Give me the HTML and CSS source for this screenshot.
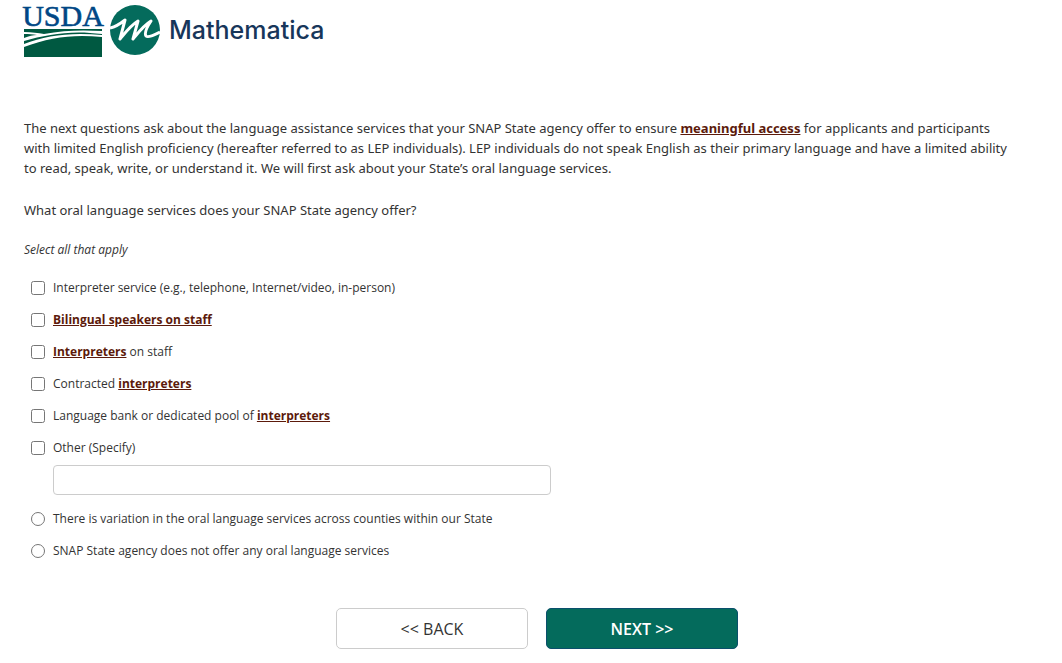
FILE: index.html
```html
<!DOCTYPE html>
<html lang="en">
<head>
    <meta charset="utf-8">
    <title>Oral language services</title>
    <meta name="viewport" content="width=device-width, initial-scale=1">
    <link rel="stylesheet" href="styles.css">
</head>
<body>
    <header class="logos">
        <svg class="logo-usda" viewBox="0 0 78 54" role="img" aria-label="USDA">
            <text class="usda-text" x="39" y="23" text-anchor="middle">USDA</text>
            <rect y="26" width="78" height="28" fill="#005941"/>
            <path fill="#fff" d="M0 29 C8 29 14 30 20 31 C40 27 60 27 78 28 V31 C48 27 24 31 0 38 V35 C5 33 9 32 13 32 C9 31 5 31 0 31 Z"/>
            <path fill="#fff" d="M0 41 C22 32 48 29 78 32 V34 C50 31 26 34 0 44 Z"/>
        </svg>
        <svg class="logo-mark" viewBox="0 0 50 50" aria-hidden="true">
            <circle cx="25" cy="25" r="25" fill="#046b5c"/>
            <path fill="none" stroke="#fff" stroke-width="3" stroke-linejoin="round" d="M0 23 C5 22 10 19 15 15 L10 34 C15 28 20 21 28 16 L23 34 C28 28 33 21 41 16 C37 22 34 28 36 31 C38 33 44 30 50 27"/>
        </svg>
        <span class="logo-name">Mathematica</span>
    </header>

    <form class="survey">
        <p class="intro">The next questions ask about the language assistance services that your SNAP State agency offer to ensure <a href="#" class="term">meaningful access</a> for applicants and participants<br>
        with limited English proficiency (hereafter referred to as LEP individuals). LEP individuals do not speak English as their primary language and have a limited ability<br>
        to read, speak, write, or understand it. We will first ask about your State’s oral language services.</p>

        <p class="question" id="question">What oral language services does your SNAP State agency offer?</p>
        <p class="hint">Select all that apply</p>

        <div class="options" role="group" aria-labelledby="question">
            <div class="option">
                <input type="checkbox" id="opt1">
                <label for="opt1">Interpreter service (e.g., telephone, Internet/video, in-person)</label>
            </div>
            <div class="option">
                <input type="checkbox" id="opt2">
                <label for="opt2"><a href="#" class="term">Bilingual speakers on staff</a></label>
            </div>
            <div class="option">
                <input type="checkbox" id="opt3">
                <label for="opt3"><a href="#" class="term">Interpreters</a> on staff</label>
            </div>
            <div class="option">
                <input type="checkbox" id="opt4">
                <label for="opt4">Contracted <a href="#" class="term">interpreters</a></label>
            </div>
            <div class="option">
                <input type="checkbox" id="opt5">
                <label for="opt5">Language bank or dedicated pool of <a href="#" class="term">interpreters</a></label>
            </div>
            <div class="option">
                <input type="checkbox" id="opt6">
                <label for="opt6">Other (Specify)</label>
            </div>
            <input type="text" class="other-text" aria-label="Other (Specify)">
            <div class="option">
                <input type="radio" name="none" id="opt7">
                <label for="opt7">There is variation in the oral language services across counties within our State</label>
            </div>
            <div class="option">
                <input type="radio" name="none" id="opt8">
                <label for="opt8">SNAP State agency does not offer any oral language services</label>
            </div>
        </div>

        <div class="buttons">
            <button type="button" class="btn btn-back">&lt;&lt; BACK</button>
            <button type="submit" class="btn btn-next">NEXT &gt;&gt;</button>
        </div>
    </form>
</body>
</html>
```
FILE: styles.css
```css
*{
    box-sizing: border-box;
}
body{
    margin: 0;
    background: #fff;
    color: #333;
    font-family: "Open Sans", "Noto Sans", sans-serif;
    font-size: 12px;
    line-height: 20px;
}
p{
    margin: 0;
}
.logos{
    display: flex;
    align-items: center;
    height: 60px;
    padding: 0 24px;
}
.logo-usda{
    width: 78px;
    height: 54px;
    overflow: visible;
}
.usda-text{
    font-family: "Liberation Serif", serif;
    font-size: 30px;
    fill: #004785;
    stroke: #004785;
    stroke-width: 0.6px;
}
.logo-mark{
    width: 50px;
    height: 50px;
    margin: 0 9px 0 8px;
}
.logo-name{
    color: #17365a;
    font-family: Inter, sans-serif;
    font-size: 25px;
    font-weight: 500;
    line-height: 30px;
}
.survey{
    padding: 58px 16px 16px 24px;
}
.intro,
.question{
    font-family: "Noto Sans", "Open Sans", sans-serif;
    font-size: 13px;
}
.question{
    margin-top: 22px;
}
.hint{
    margin-top: 20px;
    font-style: italic;
}
.term{
    color: #5c1a0b;
    font-weight: 700;
    text-decoration: underline;
}
.options{
    margin-top: 18px;
    padding-left: 7px;
}
.option{
    display: flex;
    align-items: center;
    gap: 8px;
    margin-bottom: 12px;
}
.option input{
    width: 14px;
    height: 14px;
    margin: 0;
}
.other-text{
    display: block;
    width: 498px;
    max-width: 100%;
    height: 30px;
    margin: -5px 0 14px 22px;
    padding: 4px 8px;
    border: 1px solid #ccc;
    border-radius: 4px;
    font: inherit;
}
.buttons{
    display: flex;
    justify-content: center;
    gap: 18px;
    margin-top: 47px;
    padding-left: 4px;
}
.btn{
    width: 192px;
    height: 41px;
    border: 1px solid #ccc;
    border-radius: 5px;
    background: #fff;
    color: #333;
    font-family: inherit;
    font-size: 16px;
    font-weight: 500;
}
.btn-next{
    border-color: #0b4f6c;
    background: #046b5c;
    color: #fff;
    font-weight: 600;
}
```
